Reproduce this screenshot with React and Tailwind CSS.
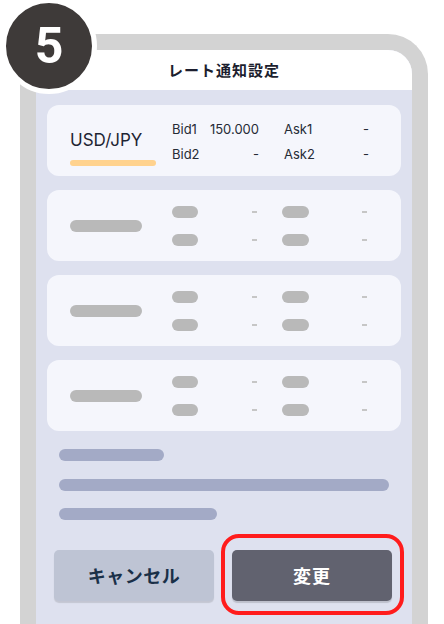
import React from "react";

const jp = { fontFamily: '"Noto Sans CJK JP", "Noto Sans", sans-serif' };
const latin = { fontFamily: 'Inter, "Noto Sans CJK JP", sans-serif' };

const RateCard = () => (
	<div className="flex h-[71px] items-center rounded-[12px] bg-[#f5f6fc] pl-[23px]" style={latin}>
		<div className="flex w-[102px] flex-col pt-[14px]">
			<span className="text-[17px] leading-[22px] text-[#1f2533]">USD/JPY</span>
			<div className="mt-[9px] h-[6px] w-[86px] rounded-full bg-[#ffd28e]"></div>
		</div>
		<div className="flex flex-col gap-[7px] pt-[1px] text-[13px] leading-[18px] text-[#262b36]">
			<div className="flex gap-[25px]">
				<div className="flex w-[87px] justify-between">
					<span>Bid1</span>
					<span>150.000</span>
				</div>
				<div className="flex w-[85px] justify-between">
					<span>Ask1</span>
					<span>-</span>
				</div>
			</div>
			<div className="flex gap-[25px]">
				<div className="flex w-[87px] justify-between">
					<span>Bid2</span>
					<span>-</span>
				</div>
				<div className="flex w-[85px] justify-between">
					<span>Ask2</span>
					<span>-</span>
				</div>
			</div>
		</div>
	</div>
);

const SkeletonRow = () => (
	<div className="flex items-center">
		<div className="flex w-[85px] items-center justify-between">
			<div className="h-[12px] w-[26px] rounded-full bg-[#b9b9b9]"></div>
			<div className="h-[2px] w-[5px] bg-[#c6c6c6]"></div>
		</div>
		<div className="ml-[25px] flex w-[85px] items-center justify-between">
			<div className="h-[12px] w-[27px] rounded-full bg-[#b9b9b9]"></div>
			<div className="h-[2px] w-[5px] bg-[#c6c6c6]"></div>
		</div>
	</div>
);

const SkeletonCard = () => (
	<div className="flex h-[71px] items-center rounded-[12px] bg-[#f5f6fc] pl-[23px]">
		<div className="w-[102px]">
			<div className="h-[12px] w-[72px] rounded-full bg-[#b9b9b9]"></div>
		</div>
		<div className="flex flex-col gap-[16px] pt-[1px]">
			<SkeletonRow />
			<SkeletonRow />
		</div>
	</div>
);

export default function App() {
	return (
		<div className="relative h-[624px] w-[444px] overflow-hidden bg-white" style={jp}>
			<div className="ml-[20px] mt-[34px] h-[640px] w-[408px] rounded-t-[40px] border-[16px] border-b-0 border-[#d3d3d3]">
				<div className="h-full overflow-hidden rounded-t-[24px] bg-[#dee1ef]">
					<div className="flex h-[40px] items-center justify-center bg-white">
						<h1 className="text-[15px] font-bold tracking-[1px] text-[#1c1e2e]">レート通知設定</h1>
					</div>
					<div className="flex flex-col gap-[14px] px-[11px] pt-[15px]">
						<RateCard />
						<SkeletonCard />
						<SkeletonCard />
						<SkeletonCard />
					</div>
					<div className="flex flex-col px-[23px] pt-[18px]">
						<div className="h-[12px] w-[105px] rounded-full bg-[#a3aac6]"></div>
						<div className="mt-[18px] h-[12px] w-[330px] rounded-full bg-[#a3aac6]"></div>
						<div className="mt-[17px] h-[12px] w-[158px] rounded-full bg-[#a3aac6]"></div>
					</div>
					<div className="flex gap-[18px] pl-[18px] pt-[30px]">
						<button className="h-[51px] w-[160px] rounded-[5px] bg-[#bec4d4] text-[18px] font-bold tracking-[0.5px] text-[#1a3048] shadow-[0_2px_1px_rgba(0,0,0,0.12)]">
							キャンセル
						</button>
						<div className="relative">
							<div className="absolute bottom-[-14px] left-[-11px] right-[-12px] top-[-16px] rounded-[18px] border-[4px] border-[#ff1c1c]"></div>
							<button className="relative h-[51px] w-[160px] rounded-[5px] bg-[#61626f] text-[18px] font-bold tracking-[1px] text-white shadow-[0_2px_1px_rgba(0,0,0,0.15)]">
								変更
							</button>
						</div>
					</div>
				</div>
			</div>
			<div className="absolute left-[1px] top-[-2px] flex h-[96px] w-[96px] items-center justify-center rounded-full border-[5px] border-white bg-[#3e3a39]">
				<span className="text-[50px] font-bold leading-none text-white" style={{ fontFamily: 'Roboto, "Liberation Sans", sans-serif' }}>
					5
				</span>
			</div>
		</div>
	);
}
